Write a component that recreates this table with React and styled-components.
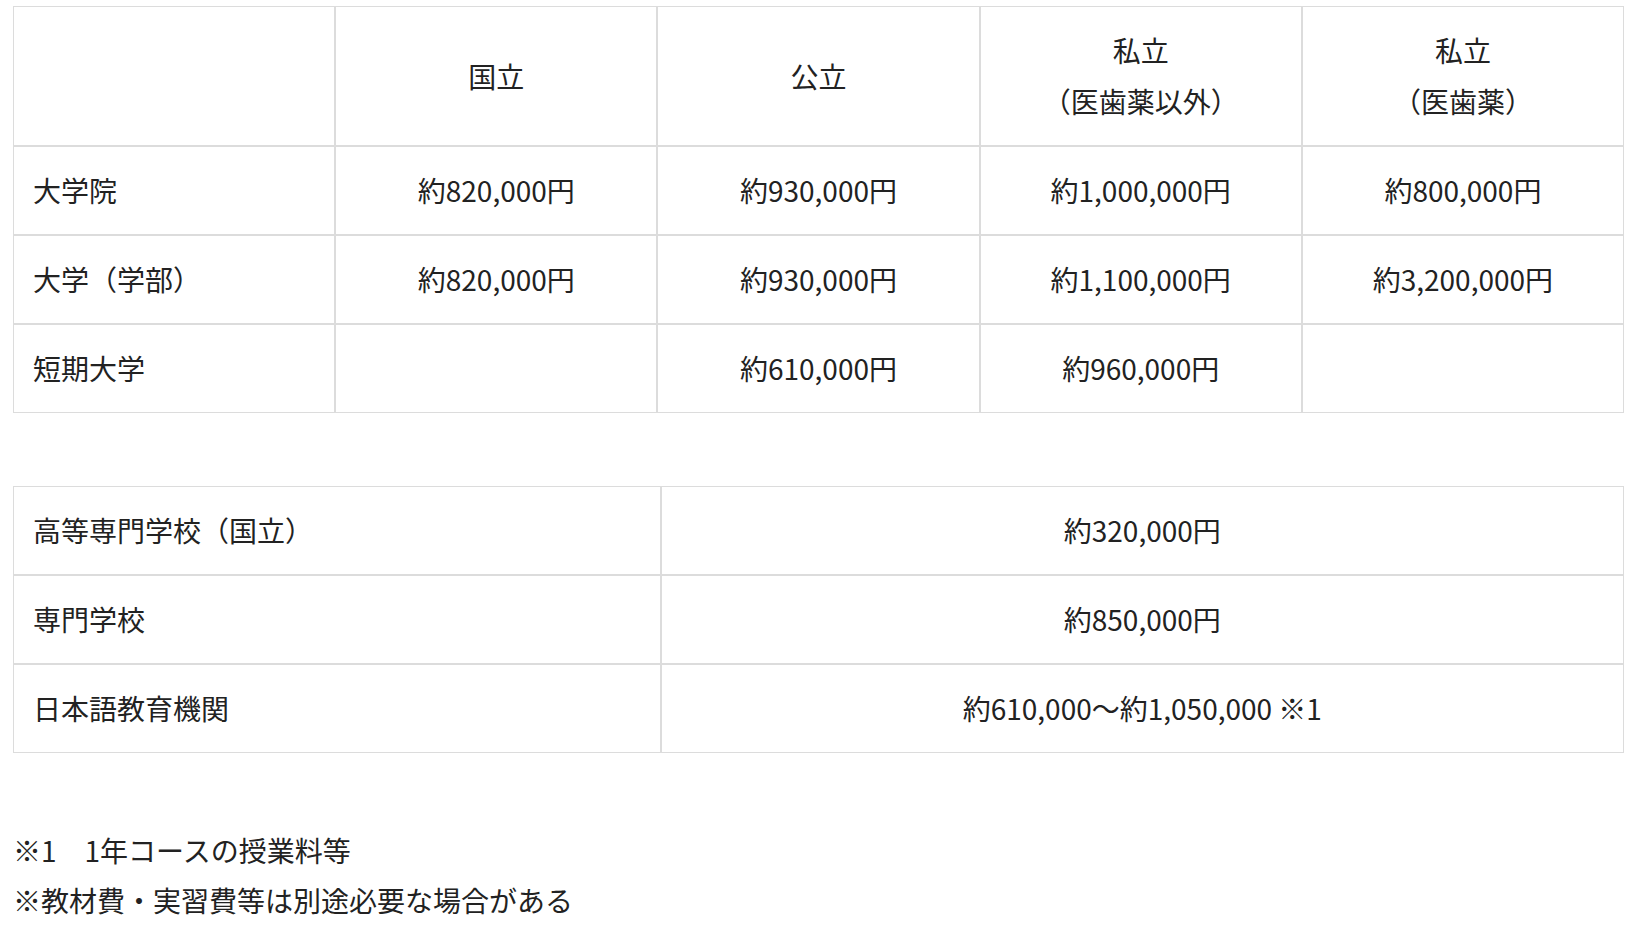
import React from "react";
import styled, { createGlobalStyle } from "styled-components";

const GlobalStyle = createGlobalStyle`
	html, body {
		margin: 0;
		padding: 0;
		background: #fff;
	}
	body {
		font-family: "Noto Sans CJK JP", "Noto Sans", sans-serif;
		color: #222;
		font-size: 28px;
		line-height: 51px;
	}
`;

const Page = styled.main`
	padding: 6px 11px 0 13px;
`;

const FeeTable = styled.table`
	width: 100%;
	table-layout: fixed;
	border-collapse: separate;
	border-spacing: 0;
	margin-top: ${props => props.$gap || 0}px;
	col.label {
		width: ${props => props.$labelWidth};
	}
`;

const Cell = styled.td`
	border: 1px solid #dcdcdc;
	padding: 18px 19px;
	line-height: 51px;
	font-weight: 400;
	vertical-align: middle;
	text-align: ${props => (props.$left ? "left" : "center")};
	color: #222;
	white-space: nowrap;
`;

const Notes = styled.div`
	margin-top: 72px;
	p {
		margin: 0;
		line-height: 50px;
	}
`;

const schools = [
	["大学院", "約820,000円", "約930,000円", "約1,000,000円", "約800,000円"],
	["大学（学部）", "約820,000円", "約930,000円", "約1,100,000円", "約3,200,000円"],
	["短期大学", "", "約610,000円", "約960,000円", ""],
];

const others = [
	["高等専門学校（国立）", "約320,000円"],
	["専門学校", "約850,000円"],
	["日本語教育機関", "約610,000～約1,050,000 ※1"],
];

const App = () => {
	return (
		<Page>
			<GlobalStyle />
			<FeeTable $labelWidth="20%">
				<colgroup>
					<col className="label" />
					<col />
					<col />
					<col />
					<col />
				</colgroup>
				<thead>
					<tr>
						<Cell as="th" />
						<Cell as="th">国立</Cell>
						<Cell as="th">公立</Cell>
						<Cell as="th">
							私立
							<br />
							（医歯薬以外）
						</Cell>
						<Cell as="th">
							私立
							<br />
							（医歯薬）
						</Cell>
					</tr>
				</thead>
				<tbody>
					{schools.map(row => (
						<tr key={row[0]}>
							{row.map((value, i) => (
								<Cell key={i} $left={i === 0}>
									{value}
								</Cell>
							))}
						</tr>
					))}
				</tbody>
			</FeeTable>

			<FeeTable $labelWidth="40.2%" $gap={73}>
				<colgroup>
					<col className="label" />
					<col />
				</colgroup>
				<tbody>
					{others.map(([name, fee]) => (
						<tr key={name}>
							<Cell $left>{name}</Cell>
							<Cell>{fee}</Cell>
						</tr>
					))}
				</tbody>
			</FeeTable>

			<Notes>
				<p>※1　1年コースの授業料等</p>
				<p>※教材費・実習費等は別途必要な場合がある</p>
			</Notes>
		</Page>
	);
};

export default App;
